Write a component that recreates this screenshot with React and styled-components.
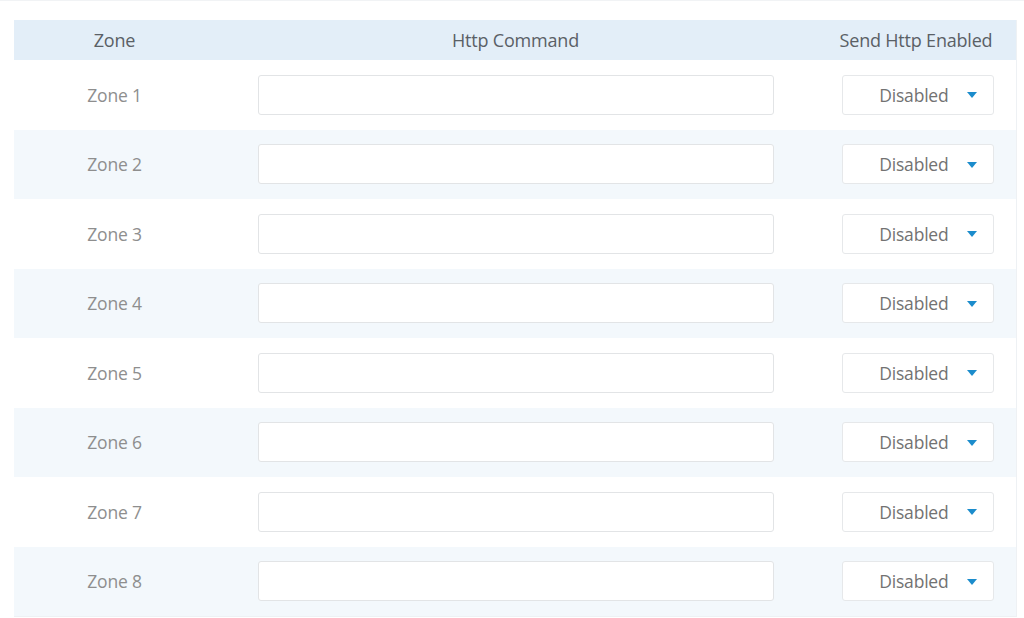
import React from "react";
import styled, { createGlobalStyle } from "styled-components";

const Global = createGlobalStyle`
  html, body { margin: 0; padding: 0; background: #fff; }
  body { font-family: "Open Sans", "Noto Sans", sans-serif; }
`;

const Card = styled.div`
  width: 1024px;
  height: 618px;
  box-sizing: border-box;
  padding: 19px 7px 0 14px;
  border-top: 1px solid #f1f3f5;
  overflow: hidden;
`;

const Table = styled.div`
  display: grid;
  grid-template-columns: 201px 1fr 200px;
  border-right: 1px solid #eef1f4;
  border-bottom: 1px solid #eef1f4;
`;

const Row = styled.div`
  display: contents;
`;

const HeadCell = styled.div`
  height: 40px;
  background: #e3eef8;
  color: #5a6066;
  font-size: 18px;
  letter-spacing: -0.2px;
  display: flex;
  align-items: center;
  justify-content: center;
`;

const Cell = styled.div`
  height: 69.5px;
  background: ${(p) => (p.$alt ? "#f3f8fc" : "#ffffff")};
  color: #8e8e8e;
  font-size: 17.5px;
  letter-spacing: -0.2px;
  display: flex;
  align-items: center;
  justify-content: center;
`;

const TextInput = styled.input`
  width: 516px;
  height: 40px;
  box-sizing: border-box;
  border: 1px solid #e2e4e6;
  border-radius: 3px;
  background: #fff;
  outline: none;
`;

const Select = styled.div`
  width: 152px;
  height: 40px;
  margin-left: 3px;
  box-sizing: border-box;
  border: 1px solid #e6e8ea;
  border-radius: 3px;
  background: #fff;
  display: flex;
  align-items: center;
  justify-content: flex-end;
  padding-right: 16px;
  gap: 18px;
  color: #727272;
  font-size: 17.5px;
  letter-spacing: -0.2px;
`;

const Caret = styled.span`
  width: 0;
  height: 0;
  border-left: 5px solid transparent;
  border-right: 5px solid transparent;
  border-top: 6px solid #1b8ccc;
  margin-top: 1px;
`;

const zones = [1, 2, 3, 4, 5, 6, 7, 8];

export default function App() {
  return (
    <>
      <Global />
      <Card>
        <Table>
          <Row>
            <HeadCell>Zone</HeadCell>
            <HeadCell>Http Command</HeadCell>
            <HeadCell>Send Http Enabled</HeadCell>
          </Row>
          {zones.map((z, i) => (
            <Row key={z}>
              <Cell $alt={i % 2 === 1}>Zone {z}</Cell>
              <Cell $alt={i % 2 === 1}>
                <TextInput type="text" />
              </Cell>
              <Cell $alt={i % 2 === 1}>
                <Select>
                  Disabled
                  <Caret />
                </Select>
              </Cell>
            </Row>
          ))}
        </Table>
      </Card>
    </>
  );
}
